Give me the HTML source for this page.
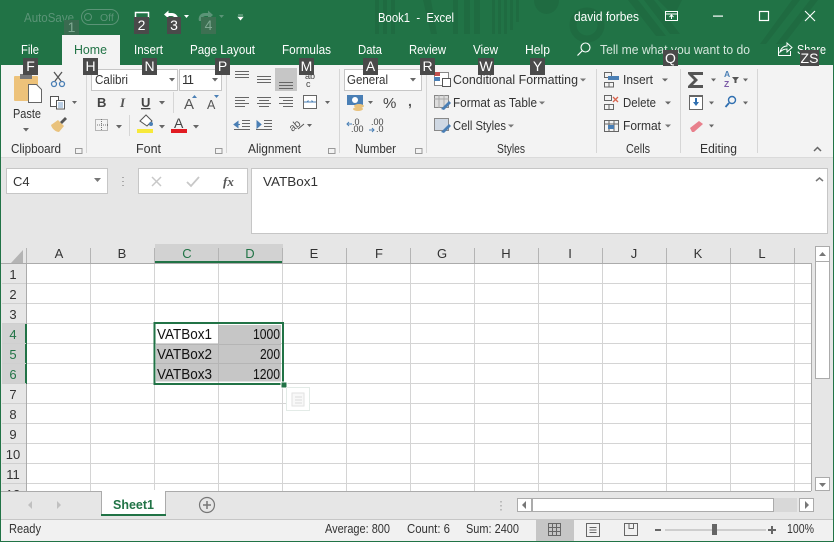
<!DOCTYPE html>
<html><head><meta charset="utf-8"><style>
html,body{margin:0;padding:0;width:834px;height:542px;overflow:hidden;background:#fff}
svg{display:block}
text{font-family:"Liberation Sans",sans-serif;font-size:13px;fill:#333}
.t{fill:#fff}
.k{fill:#fff;font-size:14px;text-anchor:middle}
.c{fill:#111;font-size:14.5px}
.h{fill:#333;font-size:13px;text-anchor:middle}
.hs{fill:#217346;font-size:13px;text-anchor:middle}
.l{fill:none;stroke:#666;stroke-width:1}
</style></head><body>
<svg width="834" height="542" viewBox="0 0 834 542" xmlns="http://www.w3.org/2000/svg">
<!-- title bar -->
<rect width="834" height="66" fill="#217346"/>
<g fill="#1f6b41">
<rect x="375" y="0" width="4" height="34"/><rect x="383" y="0" width="4" height="34"/><rect x="391" y="0" width="4" height="34"/>
<path d="M423 0h8l6 34h-6zM453 0h5v34h-5zM464 0h6v34h-6zM474 0h6v34h-6z"/>
<rect x="492" y="0" width="3" height="34"/><rect x="498" y="0" width="3" height="34"/><rect x="504" y="0" width="3" height="34"/><rect x="510" y="0" width="3" height="30"/><rect x="516" y="0" width="3" height="22"/>
<path d="M534 0h25a12.500 14 0 0 1-25 0z"/>
<path d="M628 0h10l28 36h-10zM644 0h10l26 34h-10zM658 0h24l-8 16z"/>
<path d="M682 34l28-34h22l-40 50h-10z" opacity=".0"/>
<path d="M760 44l32-44h8l-34 44zM776 44l34-44h8l-34 44z"/>
</g>
<circle cx="587" cy="25" r="14" fill="none" stroke="#1f6b41" stroke-width="7"/>
<!-- tab -->
<rect x="62" y="35" width="58" height="31" fill="#f3f3f3"/>
<!-- QAT -->
<text x="24" y="22" style="fill:#5b9477;font-size:12.500px" textLength="50" lengthAdjust="spacingAndGlyphs">AutoSave</text>
<rect x="81.500" y="9.500" width="37" height="15" rx="7.500" fill="none" stroke="#5b9477"/>
<circle cx="88" cy="17" r="3.500" fill="none" stroke="#5b9477"/>
<text x="100" y="21" style="fill:#5b9477;font-size:10.500px">Off</text>
<path d="M135.500 18V12.500H148.500V18" fill="none" stroke="#fff" stroke-width="1.500"/>
<path d="M164 14.500l4.500-4v2.500h3.500a6 6 0 0 1 6 5h-3.500a3 3 0 0 0-3-2h-3v2.500z" fill="#fff"/>
<path d="M184 15h5l-2.500 3z" fill="#fff"/>
<path d="M213 15l-5-4.500v2.500h-3a6 6 0 0 0-6 8h3a4 4 0 0 1 3-5h3v3.500z" fill="#5b9477"/>
<path d="M219 15h5l-2.500 3z" fill="#5b9477"/>
<path d="M238 15h5M238 17h5l-2.500 3z" fill="#fff" stroke="#fff" stroke-width=".6"/>
<text class="t" x="378" y="22" style="font-size:13px" textLength="76" lengthAdjust="spacingAndGlyphs">Book1&#160;&#160;-&#160;&#160;Excel</text>
<text class="t" x="574" y="21" style="font-size:13px" textLength="65" lengthAdjust="spacingAndGlyphs">david forbes</text>
<rect x="665.500" y="11.500" width="12" height="9" fill="none" stroke="#fff"/><path d="M665 14h13M671.500 19v-4M669.500 17l2-2 2 2" fill="none" stroke="#fff"/>
<rect x="713" y="15.500" width="10" height="1.200" fill="#fff"/>
<rect x="759.500" y="11.500" width="9" height="9" fill="none" stroke="#fff" stroke-width="1.200"/>
<path d="M805 11l10 10M815 11l-10 10" stroke="#fff" stroke-width="1.100"/>
<!-- tabs text -->
<text class="t" x="21" y="54" textLength="18" lengthAdjust="spacingAndGlyphs">File</text>
<text x="74" y="54" style="fill:#217346" textLength="33" lengthAdjust="spacingAndGlyphs">Home</text>
<text class="t" x="134" y="54" textLength="29" lengthAdjust="spacingAndGlyphs">Insert</text>
<text class="t" x="190" y="54" textLength="65" lengthAdjust="spacingAndGlyphs">Page Layout</text>
<text class="t" x="282" y="54" textLength="49" lengthAdjust="spacingAndGlyphs">Formulas</text>
<text class="t" x="358" y="54" textLength="24" lengthAdjust="spacingAndGlyphs">Data</text>
<text class="t" x="409" y="54" textLength="37" lengthAdjust="spacingAndGlyphs">Review</text>
<text class="t" x="473" y="54" textLength="25" lengthAdjust="spacingAndGlyphs">View</text>
<text class="t" x="525" y="54" textLength="25" lengthAdjust="spacingAndGlyphs">Help</text>
<circle cx="585.500" cy="47.500" r="4.500" fill="none" stroke="#fff" stroke-width="1.100"/><path d="M582 51l-4.500 4.500" stroke="#fff" stroke-width="1.200"/>
<text x="600" y="54" style="fill:#d4e6dc" textLength="150" lengthAdjust="spacingAndGlyphs">Tell me what you want to do</text>
<path d="M778.500 47v8.500h12V51M780 52c1-4 4-6 7-6v-3l5 4.500-5 4.500v-3c-3 0-5 1-7 3z" fill="none" stroke="#fff"/>
<text class="t" x="797" y="54" textLength="29" lengthAdjust="spacingAndGlyphs">Share</text>
<!-- ribbon -->
<rect x="0" y="65" width="834" height="92" fill="#f3f3f3"/>
<rect x="0" y="157" width="834" height="1" fill="#dadada"/>
<g fill="#d6d6d6">
<rect x="86" y="69" width="1" height="84"/><rect x="226" y="69" width="1" height="84"/><rect x="339" y="69" width="1" height="84"/><rect x="426" y="69" width="1" height="84"/><rect x="596" y="69" width="1" height="84"/><rect x="680" y="69" width="1" height="84"/><rect x="757" y="69" width="1" height="84"/>
<rect x="173" y="92" width="1" height="21"/><rect x="129" y="115" width="1" height="21"/>
</g>
<!-- clipboard -->
<rect x="14" y="76" width="24" height="25" rx="1" fill="#edc27a"/>
<rect x="20" y="74" width="12" height="5" fill="#777"/>
<path d="M28.500 84.500h8l5 5v13h-13z" fill="#fff" stroke="#666"/>
<text x="13" y="118" style="font-size:13px;fill:#333" textLength="28" lengthAdjust="spacingAndGlyphs">Paste</text>
<path d="M23 128h6l-3 3.500z" fill="#666"/>
<circle cx="54" cy="84" r="2.500" fill="none" stroke="#4a7fb5" stroke-width="1.300"/><circle cx="62" cy="84" r="2.500" fill="none" stroke="#4a7fb5" stroke-width="1.300"/>
<path d="M55 81l7-9M61 81l-7-9" stroke="#555" stroke-width="1.300"/>
<rect x="50.500" y="96.500" width="8" height="10" fill="#fff" stroke="#555"/><rect x="56.500" y="100.500" width="8" height="8.500" fill="#fff" stroke="#555"/>
<path d="M58 103h5M58 105h5M58 107h5" stroke="#4a7fb5" stroke-width=".7"/>
<path d="M72 101h5l-2.500 3z" fill="#666"/>
<path d="M51 125l7-5 6 6-5 6c-3 0-7-3-8-7z" fill="#e9c27c"/><path d="M60 122l5-5 2 2-5 5z" fill="#555"/>
<text x="11" y="153" style="font-size:12.500px" textLength="50" lengthAdjust="spacingAndGlyphs">Clipboard</text>
<path class="l" d="M75.500 148.500h6.500v5h-6.500z" style="stroke:#999"/>
<!-- font -->
<rect x="91.500" y="69.500" width="86" height="21" fill="#fff" stroke="#c6c6c6"/>
<rect x="179.500" y="69.500" width="42" height="21" fill="#fff" stroke="#c6c6c6"/>
<text x="95" y="84" textLength="33" lengthAdjust="spacingAndGlyphs">Calibri</text>
<text x="182" y="84" textLength="12">11</text>
<path d="M169 78h6l-3 3.500zM212 78h6l-3 3.500z" fill="#666"/>
<text x="97" y="107" style="font-weight:bold;font-size:13px;fill:#444">B</text>
<text x="120" y="107" style="font-style:italic;font-weight:bold;font-size:13px;font-family:'Liberation Serif',serif;fill:#555">I</text>
<text x="141" y="107" style="font-weight:bold;font-size:13px;fill:#444;text-decoration:underline">U</text>
<path d="M159 101h6l-3 3.500z" fill="#666"/>
<text x="184" y="109" style="font-size:15px;fill:#555">A</text><path d="M192 98h5l-2.500-3z" fill="#4a7fb5"/>
<text x="207" y="109" style="font-size:12.500px;fill:#555">A</text><path d="M214 95h5l-2.500 3z" fill="#4a7fb5"/>
<rect x="95.500" y="119.500" width="12" height="11" fill="none" stroke="#777" stroke-dasharray="1 1"/><path d="M101.500 119v11M95 125h13" stroke="#777" stroke-dasharray="1 1"/>
<path d="M116 125h6l-3 3.500z" fill="#666"/>
<path d="M140 121l6-6 6 6-5 5z" fill="#fff" stroke="#555"/><circle cx="151" cy="124" r="2" fill="#4a7fb5"/>
<rect x="137" y="129" width="16" height="4" fill="#f7e93a"/>
<path d="M159 125h6l-3 3.500z" fill="#666"/>
<text x="174" y="128" style="font-size:14px;fill:#444">A</text><rect x="171" y="129" width="16" height="4" fill="#e11b22"/>
<path d="M193 125h6l-3 3.500z" fill="#666"/>
<text x="136" y="153" style="font-size:12.500px" textLength="25" lengthAdjust="spacingAndGlyphs">Font</text>
<path class="l" d="M215.500 148.500h6.500v5h-6.500z" style="stroke:#999"/>
<!-- alignment -->
<rect x="275" y="68" width="22" height="23" fill="#c6c6c6"/>
<g stroke="#666" stroke-width="1" fill="none">
<path d="M235 71.500h14M235 74.500h14M235 77.500h14"/>
<path d="M257 76.500h14M257 79.500h14M257 82.500h14"/>
<path d="M279 82.500h14M279 85.500h14M279 88.500h14"/>
<path d="M235 97.500h14M235 100.500h10M235 103.500h14M235 106.500h10"/>
<path d="M257 97.500h14M259 100.500h10M257 103.500h14M259 106.500h10"/>
<path d="M279 97.500h14M283 100.500h10M279 103.500h14M283 106.500h10"/>
<path d="M242 120.500h8M242 123.500h8M242 126.500h8M234 129.500h16"/>
<path d="M264 120.500h8M264 123.500h8M264 126.500h8M256 129.500h16"/>
</g>
<path d="M234 124.500l4-3v6zM240 124.500h-3M257 121v7l4-3.500z" fill="#4a7fb5" stroke="#4a7fb5"/>
<text x="305" y="79" style="font-size:9px;fill:#444">ab</text><text x="306" y="87" style="font-size:9px;fill:#444">c</text>
<rect x="303.500" y="95.500" width="13" height="13" fill="#fff" stroke="#666"/><path d="M304 102h12M307 102l1.500-1.500M313 102l-1.500-1.500" stroke="#4a7fb5"/>
<path d="M325 101h5l-2.500 3z" fill="#666"/>
<text x="288" y="130" transform="rotate(-40 293 125)" style="font-size:10.500px;fill:#555">ab</text><path d="M298 129l6-5" stroke="#555"/>
<path d="M307 124h5l-2.500 3z" fill="#666"/>
<text x="248" y="153" style="font-size:12.500px" textLength="53" lengthAdjust="spacingAndGlyphs">Alignment</text>
<path class="l" d="M328.500 148.500h6.500v5h-6.500z" style="stroke:#999"/>
<!-- number -->
<rect x="344.500" y="69.500" width="77" height="21" fill="#fff" stroke="#c6c6c6"/>
<text x="347" y="84" textLength="41" lengthAdjust="spacingAndGlyphs">General</text>
<path d="M410 78h6l-3 3.500z" fill="#666"/>
<rect x="347" y="95" width="16" height="10" fill="#4a7fb5"/><circle cx="355" cy="100" r="3" fill="#fff"/>
<ellipse cx="359" cy="106" rx="5" ry="2" fill="#e9c27c"/><ellipse cx="358" cy="109" rx="5" ry="2" fill="#e9c27c"/>
<path d="M368 101h5l-2.500 3z" fill="#666"/>
<text x="383" y="108" style="font-size:15px;fill:#444">%</text>
<text x="408" y="106" style="font-size:14px;font-weight:bold;fill:#555">,</text>
<text x="352" y="125" style="font-size:9px;fill:#444">.0</text><text x="351" y="132" style="font-size:9px;fill:#444">.00</text>
<path d="M347 124h5M349 122l-2 2 2 2" stroke="#4a7fb5" fill="none"/>
<text x="371" y="125" style="font-size:9px;fill:#444">.00</text><text x="376" y="132" style="font-size:9px;fill:#444">.0</text>
<path d="M369 130h5M372 128l2 2-2 2" stroke="#4a7fb5" fill="none"/>
<text x="355" y="153" style="font-size:12.500px" textLength="41" lengthAdjust="spacingAndGlyphs">Number</text>
<path class="l" d="M415.500 148.500h6.500v5h-6.500z" style="stroke:#999"/>
<!-- styles -->
<rect x="434.500" y="72.500" width="14" height="13" fill="#fff" stroke="#888"/><rect x="434" y="72" width="6" height="4" fill="#c0504d"/><rect x="434" y="77" width="6" height="4" fill="#4a7fb5"/><rect x="442.500" y="78.500" width="8" height="8" fill="#fff" stroke="#555"/>
<text x="453" y="84" textLength="125" lengthAdjust="spacingAndGlyphs">Conditional Formatting</text><path d="M580 78.500h6l-3 3z" fill="#777"/>
<rect x="434.500" y="95.500" width="14" height="12" fill="#ddd" stroke="#888"/><path d="M434 99h15M439 95v13M444 95v13" stroke="#aaa"/><path d="M441 109l8-8 2 2-7 7z" fill="#4a7fb5"/>
<text x="453" y="107" textLength="84" lengthAdjust="spacingAndGlyphs">Format as Table</text><path d="M539 101.500h6l-3 3z" fill="#777"/>
<rect x="434.500" y="118.500" width="14" height="12" fill="#cfd8e3" stroke="#888"/><path d="M441 132l8-8 2 2-7 7z" fill="#4a7fb5"/>
<text x="453" y="130" textLength="53" lengthAdjust="spacingAndGlyphs">Cell Styles</text><path d="M508 124.500h6l-3 3z" fill="#777"/>
<text x="497" y="153" style="font-size:12.500px" textLength="28" lengthAdjust="spacingAndGlyphs">Styles</text>
<!-- cells -->
<g fill="none" stroke="#666">
<rect x="604.500" y="72.500" width="7" height="5"/><rect x="604.500" y="82.500" width="9" height="4.500"/><path d="M609 83v4"/>
<rect x="604.500" y="95.500" width="7" height="5"/><rect x="604.500" y="104.500" width="9" height="5"/><path d="M609 105v4"/>
<rect x="604.500" y="120.500" width="14" height="11"/><path d="M604 124h15M609 120v12M614 120v12"/>
</g>
<rect x="608" y="76" width="11" height="4" fill="#4a7fb5"/><rect x="608" y="125" width="6" height="4" fill="#4a7fb5"/>
<path d="M613 97l5 5M618 97l-5 5" stroke="#d9634c" stroke-width="1.300"/>
<text x="623" y="84" textLength="30" lengthAdjust="spacingAndGlyphs">Insert</text><path d="M662 78.500h6l-3 3z" fill="#666"/>
<text x="623" y="107" textLength="33" lengthAdjust="spacingAndGlyphs">Delete</text><path d="M665 101.500h6l-3 3z" fill="#666"/>
<text x="623" y="130" textLength="38" lengthAdjust="spacingAndGlyphs">Format</text><path d="M665 124.500h6l-3 3z" fill="#777"/>
<text x="626" y="153" style="font-size:12.500px" textLength="24" lengthAdjust="spacingAndGlyphs">Cells</text>
<!-- editing -->
<path d="M688 72h15v3h-10l5 5-5 5h10v3h-15v-2l6-6-6-6z" fill="#555"/>
<path d="M711 78.500h5l-2.500 3z" fill="#666"/>
<text x="724" y="77" style="font-size:8.500px;font-weight:bold;fill:#4a7fb5">A</text><text x="724" y="87" style="font-size:8.500px;font-weight:bold;fill:#7b5aa6">Z</text>
<path d="M732 77h7l-2.500 3v3h-2v-3z" fill="#555"/><path d="M743 78.500h5l-2.500 3z" fill="#666"/>
<rect x="689.500" y="95.500" width="13" height="14" fill="#fff" stroke="#666"/><rect x="689" y="95" width="14" height="2" fill="#666"/><path d="M693 102h6l-3 4zM695 98h2v4h-2z" fill="#2f6fb0"/>
<path d="M709 101.500h5l-2.500 3z" fill="#666"/>
<circle cx="732" cy="100" r="3.500" fill="none" stroke="#2f6fb0" stroke-width="1.400"/><path d="M729 103l-3.500 4" stroke="#2f6fb0" stroke-width="1.800"/>
<path d="M743 101.500h5l-2.500 3z" fill="#666"/>
<path d="M690 128l9-7 4 3-9 8h-2z" fill="#e8808c"/><path d="M709 124.500h5l-2.500 3z" fill="#666"/>
<text x="700" y="153" style="font-size:12.500px" textLength="37" lengthAdjust="spacingAndGlyphs">Editing</text>
<path d="M814 151l3.500-3.500 3.500 3.500" fill="none" stroke="#666" stroke-width="1.500"/>
<!-- formula bar -->
<rect x="0" y="158" width="834" height="86" fill="#e6e6e6"/>
<rect x="6.500" y="168.500" width="101" height="25" fill="#fff" stroke="#c6c6c6"/>
<text x="13" y="186" style="font-size:13px">C4</text>
<path d="M94 178h7l-3.500 4z" fill="#777"/>
<path d="M123 177v1M123 181v1M123 185v1" stroke="#aaa" stroke-width="2"/>
<rect x="138.500" y="168.500" width="109" height="25" fill="#fff" stroke="#c6c6c6"/>
<path d="M152 177l9 9M161 177l-9 9" stroke="#c8c8c8" stroke-width="1.500"/>
<path d="M187 182l4 4 8-9" fill="none" stroke="#c8c8c8" stroke-width="1.800"/>
<text x="223" y="186" style="font-family:'Liberation Serif',serif;font-style:italic;font-weight:bold;font-size:13px;fill:#555">fx</text>
<rect x="251.500" y="168.500" width="576" height="65" fill="#fff" stroke="#c6c6c6"/>
<text x="263" y="186" style="font-size:13px" textLength="55" lengthAdjust="spacingAndGlyphs">VATBox1</text>
<path d="M816 181l3.500-3 3.500 3" fill="none" stroke="#777" stroke-width="1.500"/>
<!-- sheet -->
<rect x="0" y="244" width="834" height="247" fill="#e6e6e6"/>
<rect x="27" y="264" width="784" height="227" fill="#fff"/>
<path d="M23 250v13h-12z" fill="#b4b4b4"/>
<g stroke="#d4d4d4"><path d="M90.500 264V491M154.500 264V491M218.500 264V491M282.500 264V491M346.500 264V491M410.500 264V491M474.500 264V491M538.500 264V491M602.500 264V491M666.500 264V491M730.500 264V491M794.500 264V491"/>
<path d="M27 283.500H811M27 303.500H811M27 323.500H811M27 343.500H811M27 363.500H811M27 383.500H811M27 403.500H811M27 423.500H811M27 443.500H811M27 463.500H811M27 483.500H811"/></g>
<rect x="155" y="244" width="128" height="19" fill="#d2d2d2"/>
<rect x="155" y="261" width="128" height="2.500" fill="#217346"/>
<g stroke="#b4b4b4"><path d="M26.500 248V263M90.500 248V263M154.500 248V263M218.500 248V261M282.500 248V263M346.500 248V263M410.500 248V263M474.500 248V263M538.500 248V263M602.500 248V263M666.500 248V263M730.500 248V263M794.500 248V263"/></g>
<path d="M0 263.500H811M26.500 263V491M811.500 263V491" stroke="#ababab" fill="none"/>
<rect x="2" y="324" width="24" height="60" fill="#d2d2d2"/>
<rect x="25" y="324" width="2" height="60" fill="#217346"/>
<g stroke="#cfcfcf"><path d="M2 283.500H26M2 303.500H26M2 323.500H26M2 343.500H26M2 363.500H26M2 383.500H26M2 403.500H26M2 423.500H26M2 443.500H26M2 463.500H26M2 483.500H26"/></g>
<text class="h" x="59" y="258">A</text><text class="h" x="122" y="258">B</text><text class="hs" x="187" y="258">C</text><text class="hs" x="250" y="258">D</text><text class="h" x="314" y="258">E</text><text class="h" x="379" y="258">F</text><text class="h" x="442" y="258">G</text><text class="h" x="506" y="258">H</text><text class="h" x="570" y="258">I</text><text class="h" x="634" y="258">J</text><text class="h" x="698" y="258">K</text><text class="h" x="762" y="258">L</text>
<text class="h" x="13" y="279">1</text><text class="h" x="13" y="299">2</text><text class="h" x="13" y="319">3</text><text class="hs" x="13" y="339">4</text><text class="hs" x="13" y="359">5</text><text class="hs" x="13" y="379">6</text><text class="h" x="13" y="399">7</text><text class="h" x="13" y="419">8</text><text class="h" x="13" y="439">9</text><text class="h" x="13" y="459">10</text><text class="h" x="13" y="479">11</text><text class="h" x="13" y="499">12</text>
<!-- selection -->
<rect x="219" y="325" width="62" height="56.500" fill="#c6c6c6"/>
<rect x="156" y="345" width="63" height="36.500" fill="#c6c6c6"/>
<path d="M156 363.500H281M218.500 344V381.500M156 344.500H281M218.500 325V344" stroke="#b5b5b5"/>
<rect x="154.500" y="323" width="128.500" height="61" fill="none" stroke="#217346" stroke-width="2"/>
<rect x="281" y="382" width="6" height="6" fill="#217346" stroke="#fff"/>
<text class="c" x="157" y="339" textLength="55" lengthAdjust="spacingAndGlyphs">VATBox1</text>
<text class="c" x="157" y="359" textLength="55" lengthAdjust="spacingAndGlyphs">VATBox2</text>
<text class="c" x="157" y="379" textLength="55" lengthAdjust="spacingAndGlyphs">VATBox3</text>
<text class="c" x="253" y="339" textLength="27" lengthAdjust="spacingAndGlyphs">1000</text>
<text class="c" x="260" y="359" textLength="20" lengthAdjust="spacingAndGlyphs">200</text>
<text class="c" x="253" y="379" textLength="27" lengthAdjust="spacingAndGlyphs">1200</text>
<!-- paste options -->
<rect x="286.500" y="387.500" width="23" height="23" fill="#fff" stroke="#e3ebe7"/>
<path d="M292 393h12v13h-12z" fill="#f8f8f8" stroke="#e2e2e2"/><path d="M295 397h7M295 400h7M295 403h7" stroke="#dcdcdc"/>
<!-- v scrollbar -->
<rect x="812" y="244" width="22" height="247" fill="#e6e6e6"/>
<rect x="815.500" y="246.500" width="14" height="15" fill="#fff" stroke="#ababab"/>
<path d="M819 256l3.500-4 3.500 4z" fill="#777"/>
<rect x="815.500" y="261.500" width="14" height="117" fill="#fff" stroke="#ababab"/>
<rect x="815.500" y="477.500" width="14" height="13" fill="#fff" stroke="#ababab"/>
<path d="M819 483h7l-3.500 4z" fill="#777"/>
<!-- tab bar -->
<rect x="0" y="491" width="834" height="28" fill="#e6e6e6"/>
<rect x="0" y="491" width="811" height="1" fill="#ababab"/>
<path d="M101.500 491.500V515.500H165.500V491.500" fill="#fff" stroke="#ababab"/>
<rect x="102" y="490" width="63" height="3" fill="#fff"/>
<rect x="101" y="514" width="65" height="2" fill="#217346"/>
<text x="113" y="509" style="font-weight:bold;font-size:13px;fill:#217346" textLength="41" lengthAdjust="spacingAndGlyphs">Sheet1</text>
<path d="M32 501v8l-4-4zM57 501v8l4-4z" fill="#c0c0c0"/>
<circle cx="207" cy="505" r="7.500" fill="none" stroke="#777" stroke-width="1.200"/><path d="M203 505h8M207 501v8" stroke="#777" stroke-width="1.500"/>
<path d="M501 501v1.500M501 505v1.500M501 509v1.500" stroke="#bbb" stroke-width="2"/>
<rect x="517.500" y="498.500" width="14" height="13" fill="#fff" stroke="#ababab"/><path d="M526 501v8l-4-4z" fill="#777"/>
<rect x="532.500" y="498.500" width="241" height="13" fill="#fff" stroke="#ababab"/>
<rect x="774" y="498" width="23" height="14" fill="#d8d8d8"/>
<rect x="799.500" y="498.500" width="14" height="13" fill="#fff" stroke="#ababab"/><path d="M805 501v8l4-4z" fill="#777"/>
<!-- status bar -->
<rect x="0" y="519" width="834" height="23" fill="#f1f1f1"/>
<rect x="0" y="519" width="834" height="1" fill="#c6c6c6"/>
<text x="9" y="533" style="font-size:12.500px" textLength="32" lengthAdjust="spacingAndGlyphs">Ready</text>
<text x="325" y="533" style="font-size:12.500px" textLength="65" lengthAdjust="spacingAndGlyphs">Average: 800</text>
<text x="407" y="533" style="font-size:12.500px" textLength="43" lengthAdjust="spacingAndGlyphs">Count: 6</text>
<text x="466" y="533" style="font-size:12.500px" textLength="53" lengthAdjust="spacingAndGlyphs">Sum: 2400</text>
<rect x="536" y="520" width="38" height="21" fill="#c6c6c6"/>
<g fill="none" stroke="#666">
<rect x="548.500" y="523.500" width="12" height="12"/><path d="M552.500 523V536M556.500 523V536M548 527.500H561M548 531.500H561"/>
<rect x="586.500" y="523.500" width="13" height="13"/><path d="M589.500 527.500h7M589.500 530h7M589.500 532.500h7"/>
<path d="M624.500 523.500h13v12h-13zM629 523.500v5h4.500v-5"/>
</g>
<rect x="655" y="529" width="6" height="2" fill="#666"/>
<rect x="665" y="529.500" width="101" height="1" fill="#aaa"/>
<rect x="712" y="524" width="5" height="11" fill="#666"/>
<path d="M768 530h8M772 526v8" stroke="#666" stroke-width="2"/>
<text x="787" y="533" style="font-size:12.500px" textLength="27" lengthAdjust="spacingAndGlyphs">100%</text>
<!-- keytips -->
<g><rect x="64" y="20" width="15" height="15" fill="#3a6b50"/><rect x="201" y="17" width="15" height="17" fill="#3d7052"/></g>
<g fill="#4a4a4a"><rect x="134" y="17" width="15" height="17"/><rect x="167" y="17" width="14" height="17"/>
<rect x="23" y="58" width="15" height="17"/><rect x="83" y="58" width="15" height="17"/><rect x="142" y="58" width="15" height="17"/><rect x="215" y="58" width="15" height="17"/><rect x="299" y="58" width="15" height="17"/><rect x="363" y="58" width="15" height="17"/><rect x="420" y="58" width="15" height="17"/><rect x="478" y="58" width="16" height="17"/><rect x="530" y="58" width="15" height="17"/><rect x="663" y="50" width="15" height="16"/><rect x="800" y="50" width="19" height="16"/></g>
<text class="k" x="71.500" y="32" style="fill:#7fa892">1</text><text class="k" x="141.500" y="30">2</text><text class="k" x="174" y="30">3</text><text class="k" x="208.500" y="30" style="fill:#7fa892">4</text>
<text class="k" x="30.500" y="71">F</text><text class="k" x="90.500" y="71">H</text><text class="k" x="149.500" y="71">N</text><text class="k" x="222.500" y="71">P</text><text class="k" x="306.500" y="71">M</text><text class="k" x="370.500" y="71">A</text><text class="k" x="427.500" y="71">R</text><text class="k" x="486" y="71">W</text><text class="k" x="537.500" y="71">Y</text><text class="k" x="670.500" y="63">Q</text><text class="k" x="809.500" y="63">ZS</text>
<!-- window border -->
<rect x="0" y="65" width="1" height="477" fill="#217346"/><rect x="833" y="65" width="1" height="477" fill="#217346"/><rect x="0" y="541" width="834" height="1" fill="#217346"/>
</svg>
</body></html>
